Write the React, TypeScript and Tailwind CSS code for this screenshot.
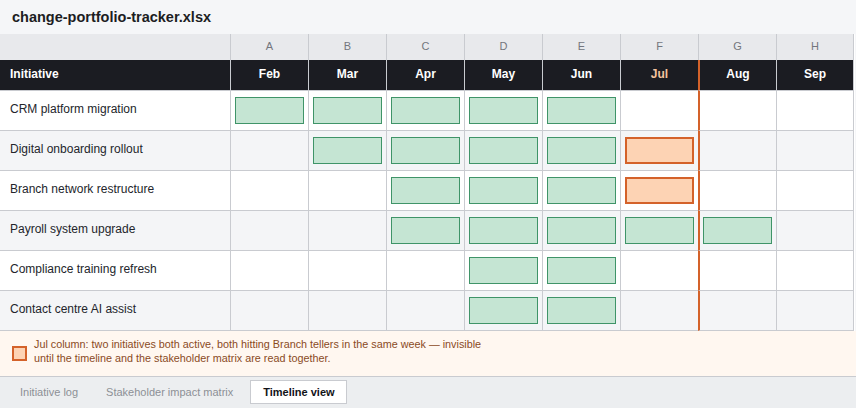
import React from "react";

const months = ["Feb", "Mar", "Apr", "May", "Jun", "Jul", "Aug", "Sep"];
const letters = ["A", "B", "C", "D", "E", "F", "G", "H"];

type Cell = "" | "g" | "o";
const rows: { name: string; cells: Cell[] }[] = [
  { name: "CRM platform migration", cells: ["g", "g", "g", "g", "g", "", "", ""] },
  { name: "Digital onboarding rollout", cells: ["", "g", "g", "g", "g", "o", "", ""] },
  { name: "Branch network restructure", cells: ["", "", "g", "g", "g", "o", "", ""] },
  { name: "Payroll system upgrade", cells: ["", "", "g", "g", "g", "g", "g", ""] },
  { name: "Compliance training refresh", cells: ["", "", "", "g", "g", "", "", ""] },
  { name: "Contact centre AI assist", cells: ["", "", "", "g", "g", "", "", ""] },
];

const font = { fontFamily: '"Liberation Sans", Arial, sans-serif' };

export default function App() {
  return (
    <div className="w-[856px] h-[408px] overflow-hidden bg-[#f5f6f8] flex flex-col" style={font}>
      {/* title */}
      <div className="h-[34px] shrink-0 flex items-center pl-3 pt-[2px] text-[14.5px] font-bold text-[#1c1d22]">
        change-portfolio-tracker.xlsx
      </div>

      {/* grid */}
      <div className="grid grid-cols-[230px_repeat(8,78px)] w-[855px] bg-white">
        {/* letter row */}
        <div className="h-[26px] bg-[#e8e9ec]" />
        {letters.map((l, i) => (
          <div
            key={l}
            className={`h-[26px] pb-[2px] bg-[#e8e9ec] border-l border-[#c9cbd0] flex items-center justify-center text-[11px] text-[#73767d] ${i === 7 ? "border-r" : ""}`}
          >
            {l}
          </div>
        ))}

        {/* header row */}
        <div className="h-[31px] pb-[3px] bg-[#1b1c22] border-b border-[#c9cbd0] flex items-center pl-[10px] text-[12px] font-bold text-white">
          Initiative
        </div>
        {months.map((m, i) => (
          <div
            key={m}
            className={`h-[31px] pb-[3px] bg-[#1b1c22] border-b border-[#c9cbd0] flex items-center justify-center text-[12px] font-bold ${
              i === 6 ? "border-l-2 border-l-[#d4622a]" : "border-l border-l-[#c9cbd0]"
            } ${i === 7 ? "border-r border-r-[#c9cbd0]" : ""} ${i === 5 ? "text-[#f4c39e]" : "text-white"}`}
          >
            {m}
          </div>
        ))}

        {/* body rows */}
        {rows.map((r, ri) => {
          const bg = ri % 2 === 1 ? "bg-[#f4f5f7]" : "bg-white";
          return (
            <React.Fragment key={r.name}>
              <div className={`h-[40px] pb-[3px] ${bg} border-b border-[#c9cbd0] flex items-center pl-[10px] text-[12px] text-[#23252b]`}>
                {r.name}
              </div>
              {r.cells.map((c, ci) => (
                <div
                  key={ci}
                  className={`h-[40px] ${bg} border-b border-b-[#c9cbd0] flex items-center ${
                    ci === 6 ? "border-l-2 border-l-[#d4622a] pl-[3px] pr-1" : "border-l border-l-[#c9cbd0] px-1"
                  } ${ci === 7 ? "border-r border-r-[#c9cbd0]" : ""}`}
                >
                  {c === "g" && (
                    <div className="w-[69px] h-[27px] bg-[#c5e5d3] border border-[#3f9468]" />
                  )}
                  {c === "o" && (
                    <div className="w-[69px] h-[27px] bg-[#fdd3b4] border-2 border-[#d4622a]" />
                  )}
                </div>
              ))}
            </React.Fragment>
          );
        })}
      </div>

      {/* footer note */}
      <div className="h-[46px] shrink-0 bg-[#fff7f0] border-b border-[#c9cbd0] flex items-start pl-3 pt-[6px] gap-[7px]">
        <div className="w-[15px] h-[15px] mt-[9px] bg-[#fdd3b4] border-2 border-[#d4622a] shrink-0" />
        <div className="text-[10.8px] leading-[14px] text-[#8a4a1e]">
          Jul column: two initiatives both active, both hitting Branch tellers in the same week — invisible
          <br />
          until the timeline and the stakeholder matrix are read together.
        </div>
      </div>

      {/* tabs */}
      <div className="flex-1 bg-[#eceef0] flex items-start pt-[3px] pl-[7px]">
        <div className="h-[24px] px-3 flex items-center text-[11px] text-[#8d9096] border border-transparent">
          Initiative log
        </div>
        <div className="h-[24px] ml-[2px] px-3 flex items-center text-[11px] text-[#8d9096] border border-transparent">
          Stakeholder impact matrix
        </div>
        <div className="h-[24px] ml-[4px] pl-3 pr-[11px] flex items-center text-[11px] font-bold text-[#111217] bg-white border border-[#c9cbd0]">
          Timeline view
        </div>
      </div>
    </div>
  );
}
